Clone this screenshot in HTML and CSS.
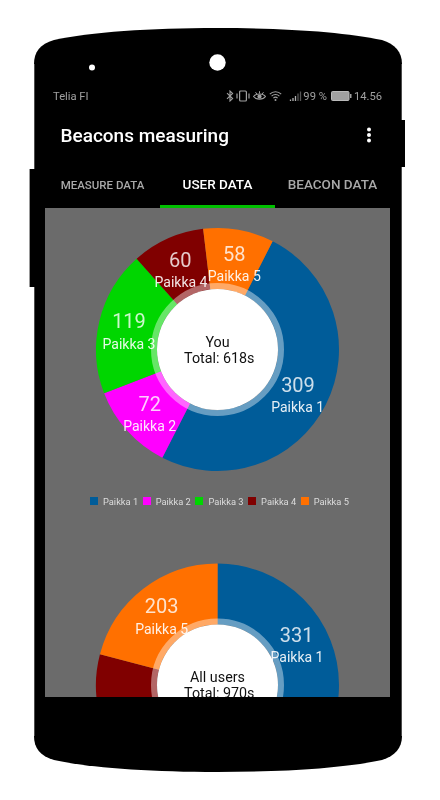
FILE: index.html
```html
<!DOCTYPE html>
<html>
<head>
    <meta charset="UTF-8">
    <title>Beacons measuring</title>
    <link rel="stylesheet" href="styles.css">
</head>
<body>
<div class="phone">
    <svg class="phone-shape" width="368" height="744" viewBox="34 28 368 744">
        <path d="M34 64C34 52 40 44 54 40C90 32 150 28 217 28C285 28 345 32 382 40C395 44 402 52 402 64V736C402 748 395 756 382 760C345 768 285 772 217 772C150 772 90 768 54 760C40 756 34 748 34 736Z" fill="#000"/>
        <path d="M34 64V169M34 287V736M402 64V120M402 167V736" stroke="#999"/>
        <circle cx="92" cy="67.5" r="3" fill="#fff"/>
        <circle cx="217.5" cy="62.5" r="8.2" fill="#fff"/>
    </svg>
    <div class="side-key side-key-left"></div>
    <div class="side-key side-key-right"></div>

    <div class="status-bar">
        <span class="carrier">Telia FI</span>
        <div class="status-right">
            <svg class="icon-bt" width="10" height="12" viewBox="0 0 10 12"><path d="M2 3.2L7.6 8.6L5 11V1L7.6 3.4L2 8.8" fill="none" stroke="#a0a0a0" stroke-width="1.1"/></svg>
            <svg class="icon-vib" width="14" height="12" viewBox="0 0 14 12"><rect x="3.6" y="1" width="6.8" height="10" rx="1" fill="none" stroke="#a0a0a0" stroke-width="1.2"/><path d="M1 3.500V8.500M13 3.500V8.500" stroke="#a0a0a0" stroke-width="1.2"/></svg>
            <svg class="icon-eye" width="13" height="12" viewBox="0 0 13 12"><path d="M.5 6.500C3 3.200 10 3.200 12.500 6.500C10 10 3 10 .5 6.500Z" fill="none" stroke="#a0a0a0" stroke-width="1.100"/><circle cx="6.500" cy="6.500" r="2.100" fill="#a0a0a0"/><path d="M2.500 2.200L3.800 4M6.500 1.200V3.500M10.500 2.200L9.200 4" stroke="#a0a0a0"/></svg>
            <svg class="icon-wifi" width="13" height="12" viewBox="0 0 13 12"><path d="M.8 4.200C4 1 9 1 12.200 4.200M2.600 6.200C4.800 4 8.200 4 10.400 6.200M4.400 8.200C5.600 7 7.400 7 8.600 8.200" fill="none" stroke="#a0a0a0" stroke-width="1.100"/><circle cx="6.500" cy="10" r="1" fill="#a0a0a0"/></svg>
            <svg class="icon-signal" width="13" height="12" viewBox="0 0 13 12"><path d="M1.500 11V9.500M4 11V8M6.500 11V6" stroke="#b0b0b0" stroke-width="1.300"/><path d="M9 11V3.500M11.500 11V1.500" stroke="#555" stroke-width="1.300"/></svg>
            <span class="battery-text">99 %</span>
            <svg class="icon-battery" width="21" height="12" viewBox="0 0 21 12"><rect x=".5" y="1.500" width="17.500" height="9" rx="1" fill="#a0a0a0" stroke="#bbb"/><rect x="19" y="4" width="1.500" height="4" fill="#a0a0a0"/></svg>
            <span class="clock">14.56</span>
        </div>
    </div>

    <div class="app-bar">
        <span class="app-title">Beacons measuring</span>
        <svg class="menu-dots" width="6" height="16" viewBox="0 0 6 16"><circle cx="3" cy="2.500" r="2" fill="#fff"/><circle cx="3" cy="8" r="2" fill="#fff"/><circle cx="3" cy="13.500" r="2" fill="#fff"/></svg>
    </div>

    <div class="tabs">
        <div class="tab tab-small">MEASURE DATA</div>
        <div class="tab tab-active">USER DATA</div>
        <div class="tab">BEACON DATA</div>
    </div>

    <div class="screen">
        <svg class="chart" width="345" height="283" viewBox="0 0 345 283">
            <g fill="none" stroke-width="61">
                <circle cx="172.500" cy="141.500" r="91" pathLength="618" stroke-dasharray="309 618" stroke="#005c99" transform="rotate(-63 172.500 141.500)"/>
                <circle cx="172.500" cy="141.500" r="91" pathLength="618" stroke-dasharray="72 618" stroke="#ff00ff" transform="rotate(117 172.500 141.500)"/>
                <circle cx="172.500" cy="141.500" r="91" pathLength="618" stroke-dasharray="119 618" stroke="#00d600" transform="rotate(158.940 172.500 141.500)"/>
                <circle cx="172.500" cy="141.500" r="91" pathLength="618" stroke-dasharray="60 618" stroke="#800000" transform="rotate(228.260 172.500 141.500)"/>
                <circle cx="172.500" cy="141.500" r="91" pathLength="618" stroke-dasharray="58 618" stroke="#ff7000" transform="rotate(263.210 172.500 141.500)"/>
            </g>
            <circle class="hole-ring" cx="172.500" cy="141.500" r="63.500"/>
            <circle class="hole" cx="172.500" cy="141.500" r="60.500"/>
            <text class="slice-value" x="253" y="183.700">309</text>
            <text class="slice-name" x="252.700" y="204">Paikka 1</text>
            <text class="slice-value" x="104.700" y="202.700">72</text>
            <text class="slice-name" x="104.700" y="222.700">Paikka 2</text>
            <text class="slice-value" x="84" y="120">119</text>
            <text class="slice-name" x="84" y="140.700">Paikka 3</text>
            <text class="slice-value" x="135.300" y="58.700">60</text>
            <text class="slice-name" x="136" y="79">Paikka 4</text>
            <text class="slice-value" x="189.300" y="52.700">58</text>
            <text class="slice-name" x="189.300" y="73">Paikka 5</text>
            <text class="center-text" x="172.500" y="138.700">You</text>
            <text class="center-text" x="174.300" y="155">Total: 618s</text>
        </svg>

        <div class="legend">
            <div class="legend-item"><span class="swatch swatch-1"></span>Paikka 1</div>
            <div class="legend-item"><span class="swatch swatch-2"></span>Paikka 2</div>
            <div class="legend-item"><span class="swatch swatch-3"></span>Paikka 3</div>
            <div class="legend-item"><span class="swatch swatch-4"></span>Paikka 4</div>
            <div class="legend-item"><span class="swatch swatch-5"></span>Paikka 5</div>
        </div>

        <svg class="chart chart-second" width="345" height="283" viewBox="0 0 345 283">
            <g fill="none" stroke-width="61">
                <circle cx="172.500" cy="142" r="91" pathLength="970" stroke-dasharray="331 970" stroke="#005c99" transform="rotate(-90 172.500 142)"/>
                <circle cx="172.500" cy="142" r="91" pathLength="970" stroke-dasharray="136 970" stroke="#ff00ff" transform="rotate(32.840 172.500 142)"/>
                <circle cx="172.500" cy="142" r="91" pathLength="970" stroke-dasharray="200 970" stroke="#00d600" transform="rotate(83.320 172.500 142)"/>
                <circle cx="172.500" cy="142" r="91" pathLength="970" stroke-dasharray="100 970" stroke="#800000" transform="rotate(157.550 172.500 142)"/>
                <circle cx="172.500" cy="142" r="91" pathLength="970" stroke-dasharray="203 970" stroke="#ff7000" transform="rotate(194.660 172.500 142)"/>
            </g>
            <circle class="hole-ring" cx="172.500" cy="142" r="63.500"/>
            <circle class="hole" cx="172.500" cy="142" r="60.500"/>
            <text class="slice-value" x="251.700" y="98.700">331</text>
            <text class="slice-name" x="252" y="119">Paikka 1</text>
            <text class="slice-value" x="116.700" y="70">203</text>
            <text class="slice-name" x="116.700" y="90.700">Paikka 5</text>
            <text class="center-text" x="172.500" y="138.700">All users</text>
            <text class="center-text" x="174.300" y="155">Total: 970s</text>
        </svg>
    </div>
</div>
</body>
</html>
```
FILE: styles.css
```css
body {
    margin: 0;
    background-color: #fff;
    font-family: Roboto, "Liberation Sans", sans-serif;
}

.phone {
    position: relative;
    width: 368px;
    height: 744px;
    margin: 28px 0 0 34px;
    padding-top: 58px;
    box-sizing: border-box;
}

.phone-shape {
    position: absolute;
    top: 0;
    left: 0;
}

.side-key {
    position: absolute;
    background-color: #000;
}

.side-key-left {
    left: -5px;
    top: 141px;
    width: 4px;
    height: 118px;
    border-left: 1px solid #999;
}

.side-key-right {
    left: 368px;
    top: 92px;
    width: 3px;
    height: 47px;
}

.status-bar {
    position: relative;
    display: flex;
    justify-content: space-between;
    align-items: center;
    height: 20px;
    padding: 0 20px 0 19px;
    font-size: 11.2px;
    color: #a0a0a0;
    filter: blur(0.35px);
}

.status-right {
    display: flex;
    align-items: center;
}

.status-right svg {
    display: block;
}

.icon-vib {
    margin-left: 1.500px;
}

.icon-eye {
    margin-left: 2.500px;
}

.icon-wifi {
    margin-left: 3px;
}

.icon-signal {
    margin-left: 7px;
}

.battery-text {
    margin-left: 1.500px;
}

.icon-battery {
    margin-left: 4px;
}

.clock {
    margin-left: 2px;
}

.app-bar {
    position: relative;
    display: flex;
    justify-content: space-between;
    align-items: center;
    height: 58px;
    padding: 0 30px 0 26.500px;
    filter: blur(0.35px);
}

.app-title {
    font-size: 19px;
    font-weight: 500;
    color: #fff;
}

.tabs {
    position: relative;
    display: flex;
    width: 345px;
    height: 44px;
    margin-left: 11px;
    filter: blur(0.35px);
}

.tab {
    flex: 1;
    box-sizing: border-box;
    padding-top: 12px;
    text-align: center;
    font-size: 13.500px;
    font-weight: 500;
    color: #a8a8a8;
}

.tab-small {
    padding-top: 14px;
    font-size: 11.500px;
}

.tab-active {
    color: #fff;
    border-bottom: 3px solid #00c000;
}

.screen {
    position: relative;
    width: 345px;
    height: 489px;
    margin-left: 11px;
    overflow: hidden;
    background-color: #6b6b6b;
    filter: blur(0.35px);
}

.chart {
    display: block;
}

.chart-second {
    margin-top: 32px;
}

.hole-ring {
    fill: none;
    stroke: #fff;
    stroke-opacity: 0.4;
    stroke-width: 6px;
}

.hole {
    fill: #fff;
}

.slice-value,
.slice-name,
.center-text {
    text-anchor: middle;
}

.slice-value {
    font-size: 20px;
    fill: #fff;
    fill-opacity: 0.8;
}

.slice-name {
    font-size: 14px;
    fill: #fff;
    fill-opacity: 0.9;
}

.center-text {
    font-size: 14.300px;
    fill: #111;
}

.legend {
    display: flex;
    height: 20px;
    padding-left: 45px;
    align-items: center;
    font-size: 9.300px;
    color: #ddd;
}

.legend-item {
    display: flex;
    align-items: center;
    width: 52.700px;
    white-space: nowrap;
}

.swatch {
    width: 8px;
    height: 8px;
    margin-right: 5px;
}

.swatch-1 {
    background-color: #005c99;
}

.swatch-2 {
    background-color: #ff00ff;
}

.swatch-3 {
    background-color: #00d600;
}

.swatch-4 {
    background-color: #800000;
}

.swatch-5 {
    background-color: #ff7000;
}
```
